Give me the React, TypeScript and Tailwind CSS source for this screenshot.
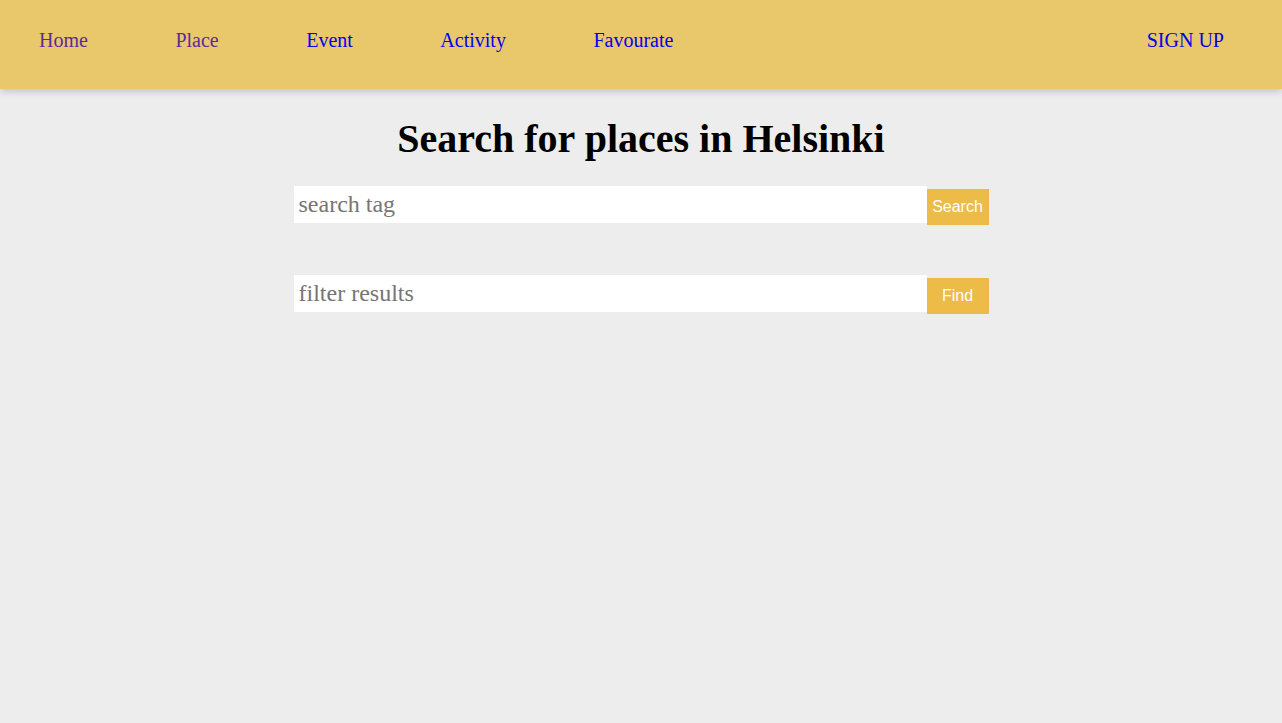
import React, { useState } from 'react';

const links = [
  { label: 'Home', visited: true },
  { label: 'Place', visited: true },
  { label: 'Event', visited: false },
  { label: 'Activity', visited: false },
  { label: 'Favourate', visited: false },
];

const SearchRow: React.FC<{ placeholder: string; button: string }> = ({ placeholder, button }) => {
  const [value, setValue] = useState('');
  return (
    <div className="flex items-start">
      <input
        value={value}
        onChange={(e) => setValue(e.target.value)}
        placeholder={placeholder}
        className="w-[633px] h-[37px] bg-white px-[5px] text-[24px] font-['Liberation_Serif',serif] text-black placeholder:text-[#757575] outline-none"
      />
      <button className="mt-[3px] w-[62px] h-[36px] bg-[#edbb47] text-white text-[16px] font-['Liberation_Sans',Arial,sans-serif]">
        {button}
      </button>
    </div>
  );
};

const App: React.FC = () => {
  return (
    <div className="min-h-screen bg-[#ededed] font-['Liberation_Serif',serif]">
      {/* Top nav */}
      <header className="h-[89px] bg-[#e9c76b] shadow-[0_2px_8px_rgba(0,0,0,0.2)] flex items-center justify-between pl-[39px] pr-[58px] relative z-10">
        <nav className="flex items-center gap-[87.5px] text-[20px] pb-[10px]">
          {links.map((l) => (
            <a key={l.label} href="#" className={l.visited ? 'text-[#5b2a9a]' : 'text-[#0000ee]'}>
              {l.label}
            </a>
          ))}
        </nav>
        <a href="#" className="text-[20px] text-[#0000ee] pb-[10px]">
          SIGN UP
        </a>
      </header>

      <main className="flex flex-col items-center">
        <h1 className="mt-[27px] text-[40px] leading-[46px] font-bold text-black">Search for places in Helsinki</h1>
        <div className="mt-[24px] flex flex-col gap-[50px]">
          <SearchRow placeholder="search tag" button="Search" />
          <SearchRow placeholder="filter results" button="Find" />
        </div>
      </main>
    </div>
  );
};

export default App;
